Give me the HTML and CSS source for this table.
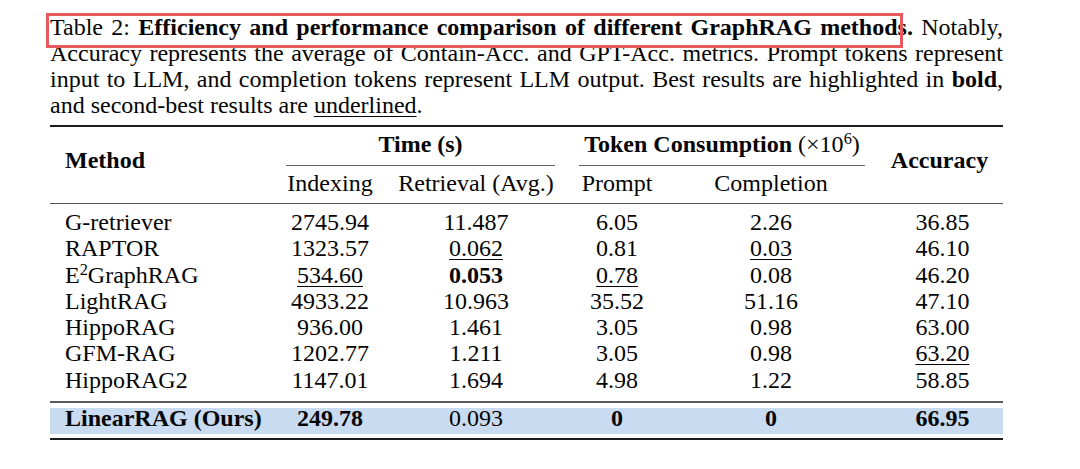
FILE: index.html
```html
<!DOCTYPE html>
<html>
<head>
<meta charset="utf-8">
<link rel="stylesheet" href="styles.css">
</head>
<body>
<div class="page">
  <div class="caption">
    <span class="line just">Table 2: <b>Efficiency and performance comparison of different GraphRAG methods.</b> Notably,</span>
    <span class="line just">Accuracy represents the average of Contain-Acc. and GPT-Acc. metrics. Prompt tokens represent</span>
    <span class="line just">input to LLM, and completion tokens represent LLM output. Best results are highlighted in <b>bold</b>,</span>
    <span class="line">and second-best results are <span class="ul">underlined</span>.</span>
    <div class="mark-box"></div>
  </div>
  <table class="results">
    <colgroup>
      <col class="c-method"><col class="c-idx"><col class="c-ret"><col class="c-prompt"><col class="c-comp"><col class="c-acc">
    </colgroup>
    <thead>
      <tr class="h1">
        <th rowspan="2" class="method-h">Method</th>
        <th colspan="2" class="group"><div class="cmid cmid-time">Time (s)</div></th>
        <th colspan="2" class="group"><div class="cmid cmid-token">Token Consumption <span class="reg">(×10<span class="sup">6</span>)</span></div></th>
        <th rowspan="2" class="acc-h">Accuracy</th>
      </tr>
      <tr class="h2">
        <th>Indexing</th>
        <th class="ret-h">Retrieval (Avg.)</th>
        <th class="prompt-h">Prompt</th>
        <th class="comp-h">Completion</th>
      </tr>
    </thead>
    <tbody>
      <tr class="first"><td class="m">G-retriever</td><td>2745.94</td><td>11.487</td><td>6.05</td><td>2.26</td><td>36.85</td></tr>
      <tr><td class="m">RAPTOR</td><td>1323.57</td><td><span class="ul">0.062</span></td><td>0.81</td><td><span class="ul">0.03</span></td><td>46.10</td></tr>
      <tr><td class="m">E<span class="sup">2</span>GraphRAG</td><td><span class="ul">534.60</span></td><td><b>0.053</b></td><td><span class="ul">0.78</span></td><td>0.08</td><td>46.20</td></tr>
      <tr><td class="m">LightRAG</td><td>4933.22</td><td>10.963</td><td>35.52</td><td>51.16</td><td>47.10</td></tr>
      <tr><td class="m">HippoRAG</td><td>936.00</td><td>1.461</td><td>3.05</td><td>0.98</td><td>63.00</td></tr>
      <tr><td class="m">GFM-RAG</td><td>1202.77</td><td>1.211</td><td>3.05</td><td>0.98</td><td><span class="ul">63.20</span></td></tr>
      <tr class="last"><td class="m">HippoRAG2</td><td>1147.01</td><td>1.694</td><td>4.98</td><td>1.22</td><td>58.85</td></tr>
    </tbody>
    <tfoot>
      <tr class="ours">
        <td class="m"><div class="band"><b>LinearRAG (Ours)</b></div></td>
        <td><div class="band"><b>249.78</b></div></td>
        <td><div class="band">0.093</div></td>
        <td><div class="band"><b>0</b></div></td>
        <td><div class="band"><b>0</b></div></td>
        <td><div class="band"><b>66.95</b></div></td>
      </tr>
    </tfoot>
  </table>
</div>
</body>
</html>
```

FILE: styles.css
```css
html, body {
  margin: 0;
  padding: 0;
  background: #ffffff;
}

.page {
  width: 953px;
  margin-left: 50px;
  padding-top: 14px;
  font-family: "Liberation Serif", "Times New Roman", serif;
  font-size: 24px;
  color: #050505;
}

.caption {
  position: relative;
}

.caption .line {
  display: block;
  line-height: 26px;
  white-space: nowrap;
}

.caption .line.just {
  text-align: justify;
  text-align-last: justify;
}

.ul {
  text-decoration: underline;
  text-decoration-thickness: 1px;
  text-underline-offset: 3px;
}

.mark-box {
  position: absolute;
  left: -4px;
  top: -1px;
  width: 851px;
  height: 29px;
  border: 3px solid #e85a5e;
}

.sup {
  font-size: 0.68em;
  vertical-align: 0.5em;
  line-height: 0;
}

.results {
  width: 953px;
  margin-top: 7px;
  table-layout: fixed;
  border-collapse: separate;
  border-spacing: 0;
  border-top: 2px solid #1c1c1c;
}

.c-method { width: 232px; }
.c-idx { width: 96px; }
.c-ret { width: 196px; }
.c-prompt { width: 86px; }
.c-comp { width: 222px; }
.c-acc { width: 121px; }

.results th,
.results td {
  padding: 0;
  text-align: center;
  white-space: nowrap;
  line-height: 26px;
}

.results th {
  font-weight: normal;
}

.method-h,
.acc-h {
  font-weight: bold !important;
  vertical-align: middle;
  border-bottom: 1px solid #555;
  padding-bottom: 10px !important;
}

.method-h {
  text-align: left !important;
  padding-left: 15px !important;
}

.acc-h {
  padding-right: 6px !important;
}

.h1 .group {
  vertical-align: top;
}

.cmid {
  font-weight: bold;
  padding-top: 4px;
  padding-bottom: 8px;
  border-bottom: 1px solid #666;
}

.cmid-time {
  margin-left: 4px;
  margin-right: 19px;
}

.cmid-token {
  margin-left: 5px;
  margin-right: 17px;
}

.reg {
  font-weight: normal;
}

.h2 th {
  padding-top: 4px;
  padding-bottom: 7px;
  border-bottom: 1px solid #555;
}

.results td.m {
  text-align: left;
  padding-left: 15px;
}

.results tbody td {
  line-height: 26.3px;
}

.results tbody tr.first td {
  padding-top: 5px;
}

.results tbody tr.last td {
  padding-bottom: 8px;
}

.results tfoot td {
  border-top: 2px solid #5a5a5a;
  border-bottom: 2px solid #1c1c1c;
  padding: 5px 0 4px 0;
}

.results tfoot td.m {
  padding-left: 0;
}

.band {
  background: #c9dbf1;
  height: 26px;
  line-height: 21px;
}

.results tfoot td.m .band {
  padding-left: 15px;
}
```
